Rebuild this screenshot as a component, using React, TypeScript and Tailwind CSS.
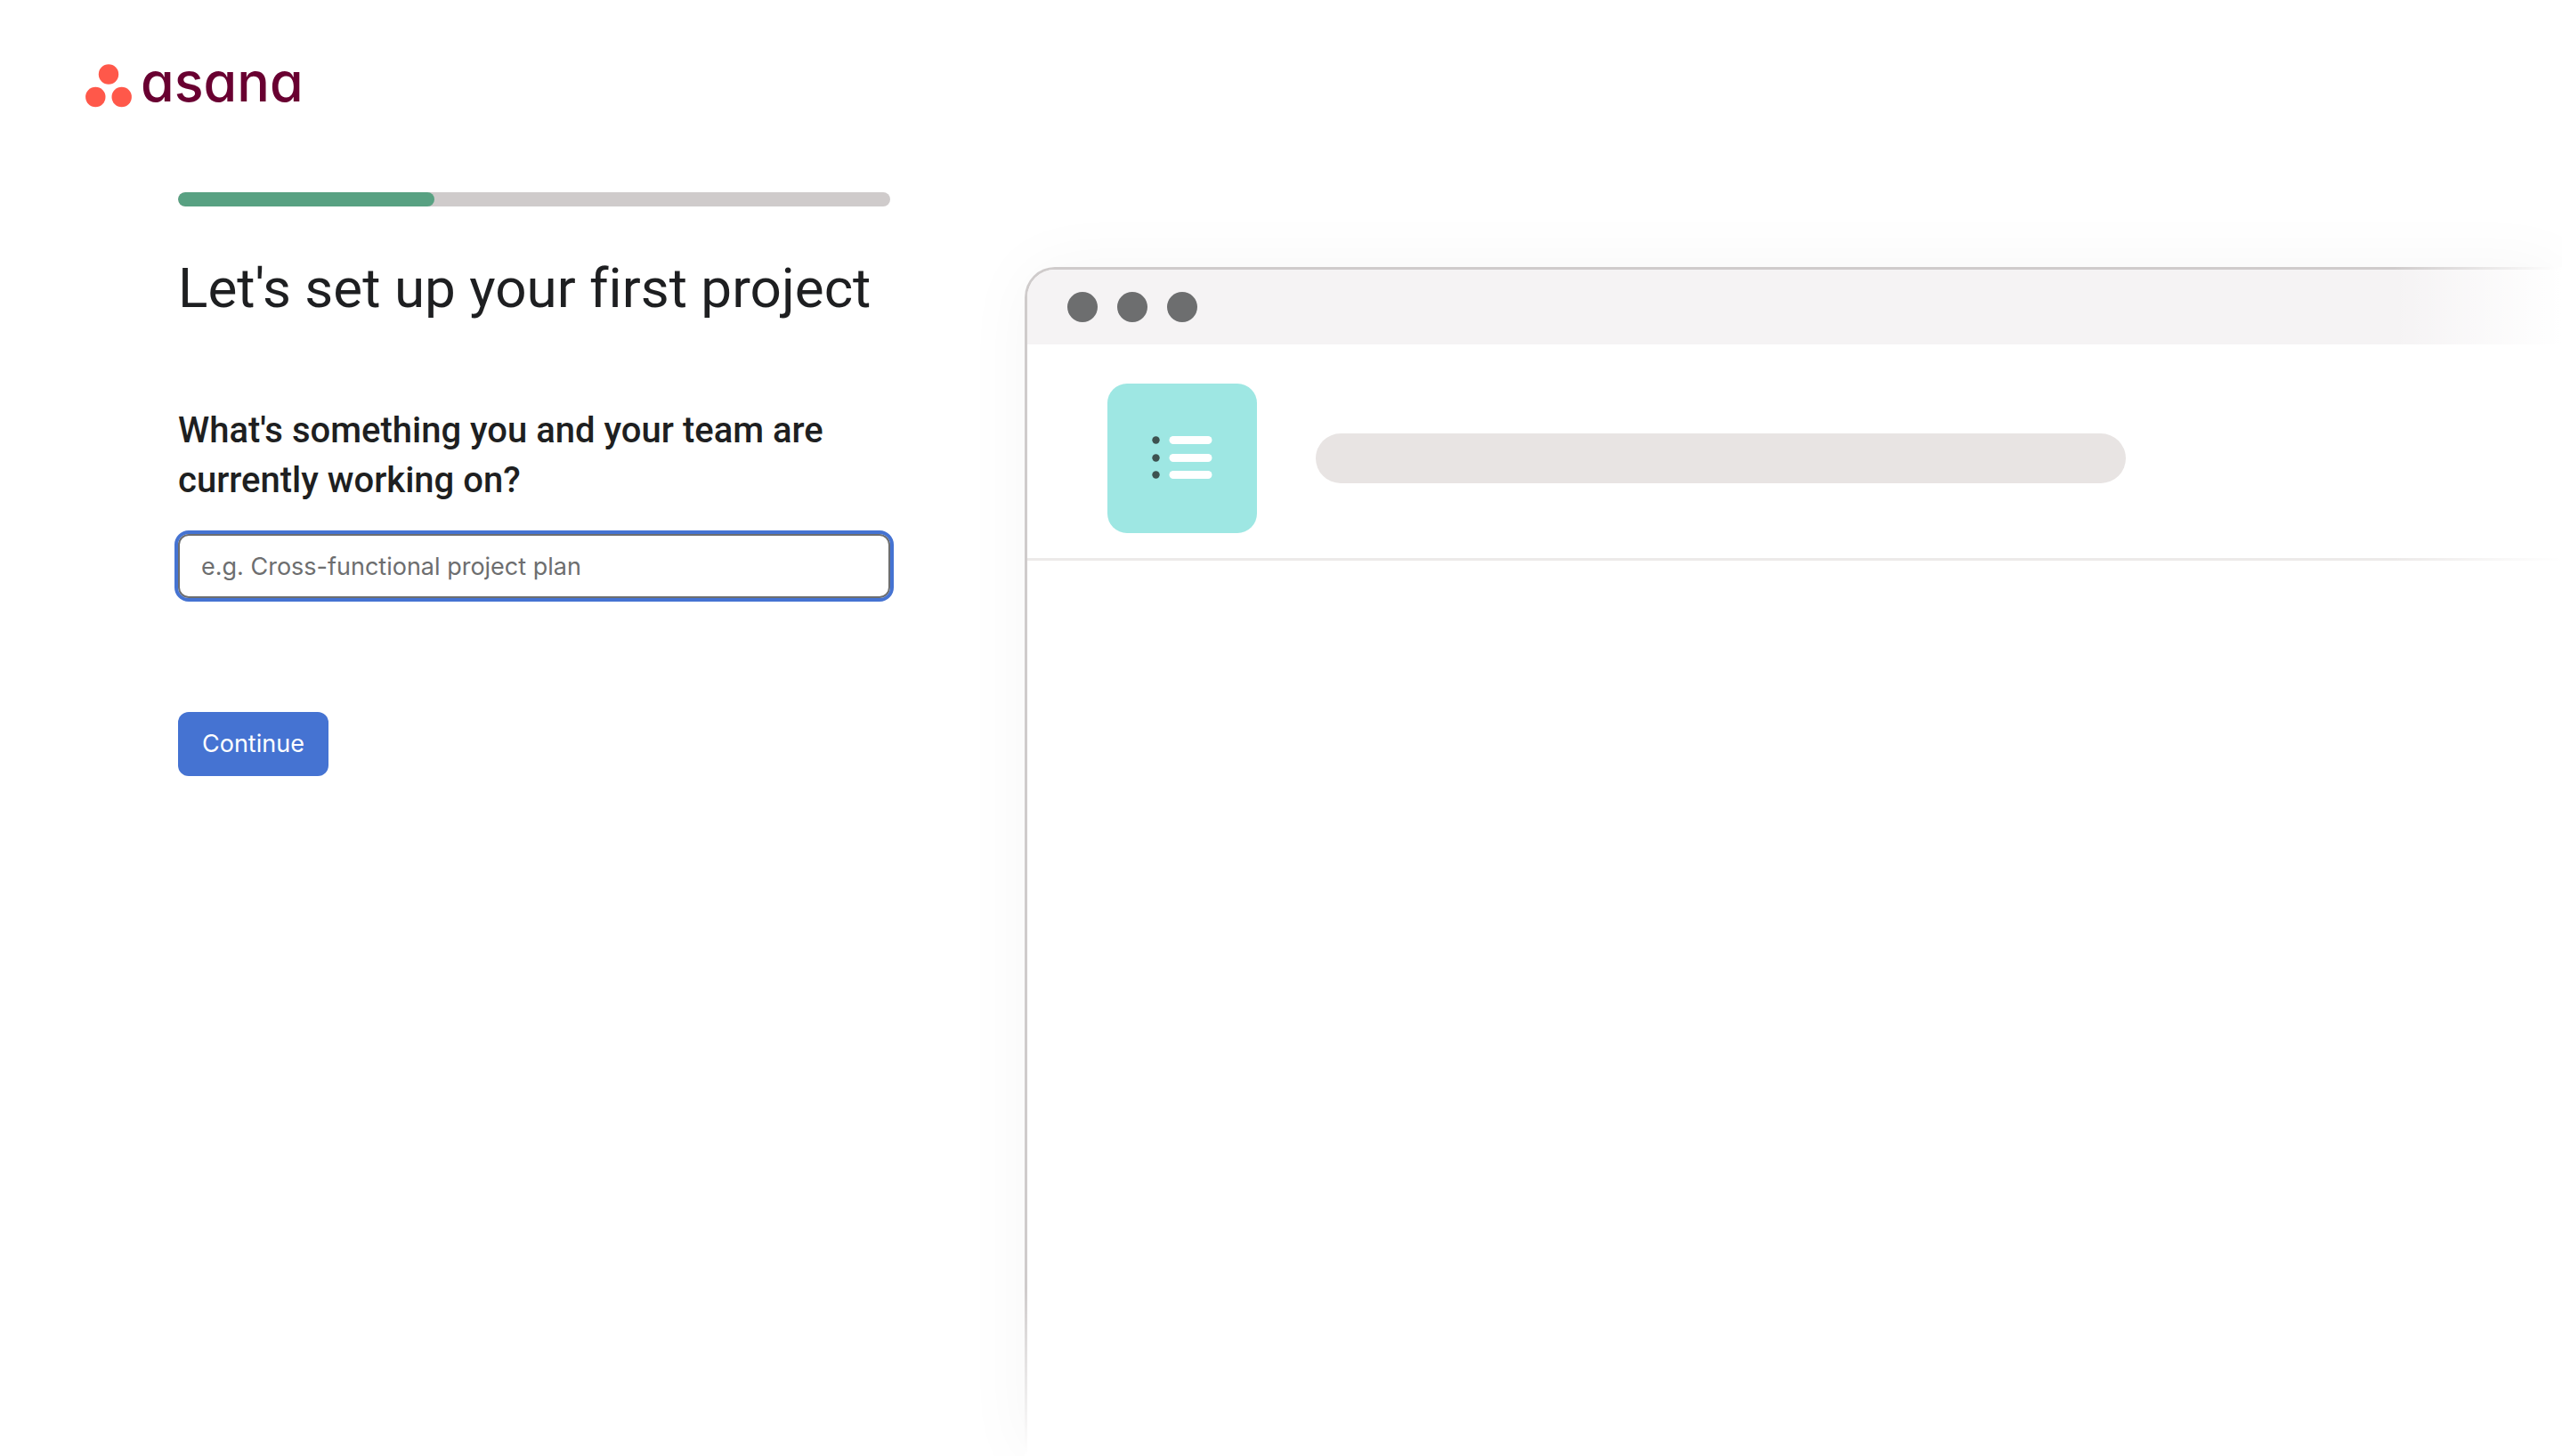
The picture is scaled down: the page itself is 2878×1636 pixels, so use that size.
const listRows = [4, 24, 43];

function Logo() {
  return (
    <a href="#" aria-label="asana" className="flex w-fit items-center gap-2.5">
      <svg viewBox="0 0 52 49" className="mt-2 h-[49px] w-[52px] shrink-0" fill="#ff584a" aria-hidden="true">
        <circle cx="26" cy="11.5" r="11.2" />
        <circle cx="11.3" cy="37" r="11.2" />
        <circle cx="40.7" cy="37" r="11.2" />
      </svg>
      <span className="text-[61px] leading-[72px] font-medium text-[#690031] [font-feature-settings:'cv11']">
        asana
      </span>
    </a>
  );
}

function SetupForm() {
  return (
    <form className="mt-[88px] ml-[104px] w-[800px] max-w-full" onSubmit={(e) => e.preventDefault()}>
      <div
        role="progressbar"
        aria-label="Setup progress"
        aria-valuenow={36}
        aria-valuemin={0}
        aria-valuemax={100}
        className="h-4 overflow-hidden rounded-lg bg-[#cfcbcb]"
      >
        <div className="h-full w-[36%] rounded-lg bg-[#58a182]" />
      </div>
      <h1 className="mt-[52px] font-['Roboto',sans-serif] text-[62px] leading-[80px] font-normal whitespace-nowrap [font-variant-ligatures:none]">
        Let's set up your first project
      </h1>
      <label
        htmlFor="project-name"
        className="mt-[92px] block font-['Roboto',sans-serif] text-[40px] leading-[56px] font-medium"
      >
        What's something you and your team are currently working on?
      </label>
      <input
        id="project-name"
        type="text"
        placeholder="e.g. Cross-functional project plan"
        className="mt-8 block h-[72px] w-full rounded-xl border-2 border-[#6d6e6f] bg-white px-6 text-[27px] outline-4 outline-[#4573d2] placeholder:text-[#6d6e6f]"
      />
      <button
        type="submit"
        className="mt-32 flex h-[72px] items-center rounded-xl bg-[#4573d2] px-[27px] text-[27px] text-white"
      >
        Continue
      </button>
    </form>
  );
}

function ProjectPreview() {
  return (
    <section
      aria-label="Project preview"
      className="relative mt-[300px] flex-1 rounded-tl-[34px] bg-white shadow-[0_0_80px_rgba(0,0,0,0.04)]"
    >
      <div className="flex h-full flex-col overflow-hidden rounded-tl-[34px] border-t-[3px] border-l-[3px] border-[#cfcbcb]">
        <div className="flex h-[84px] shrink-0 items-center gap-[22px] bg-[#f5f3f4] pl-[45px]">
          <span className="size-[34px] rounded-full bg-[#6d6e6f]" />
          <span className="size-[34px] rounded-full bg-[#6d6e6f]" />
          <span className="size-[34px] rounded-full bg-[#6d6e6f]" />
        </div>
        <div className="flex h-[243px] shrink-0 items-center gap-[66px] border-b-[3px] border-[#edeae9] pt-4 pl-[90px]">
          <div className="flex size-[168px] shrink-0 items-center justify-center rounded-[22px] bg-[#9ee7e3] pb-0.5">
            <svg viewBox="0 0 68 48" className="h-12 w-[68px]" aria-hidden="true">
              {listRows.map((y) => (
                <g key={y}>
                  <circle cx="4.5" cy={y + 0.5} r="4.2" fill="#3d5250" />
                  <rect x="19.5" y={y - 4} width="48" height="9" rx="4.5" fill="#fff" />
                </g>
              ))}
            </svg>
          </div>
          <div className="mr-[30%] h-14 flex-1 rounded-full bg-[#e8e4e3]" />
        </div>
      </div>
      <div className="absolute inset-y-0 right-0 w-[190px] bg-linear-to-r from-white/0 to-white" />
      <div className="absolute inset-x-0 bottom-0 h-[190px] bg-linear-to-b from-white/0 to-white" />
    </section>
  );
}

export default function App() {
  return (
    <main className="flex min-h-screen overflow-hidden bg-white font-['Inter',sans-serif] text-[#1e1f21]">
      <div className="w-2/5 shrink-0 pt-14 pl-24">
        <Logo />
        <SetupForm />
      </div>
      <div className="flex flex-1 flex-col">
        <ProjectPreview />
      </div>
    </main>
  );
}
